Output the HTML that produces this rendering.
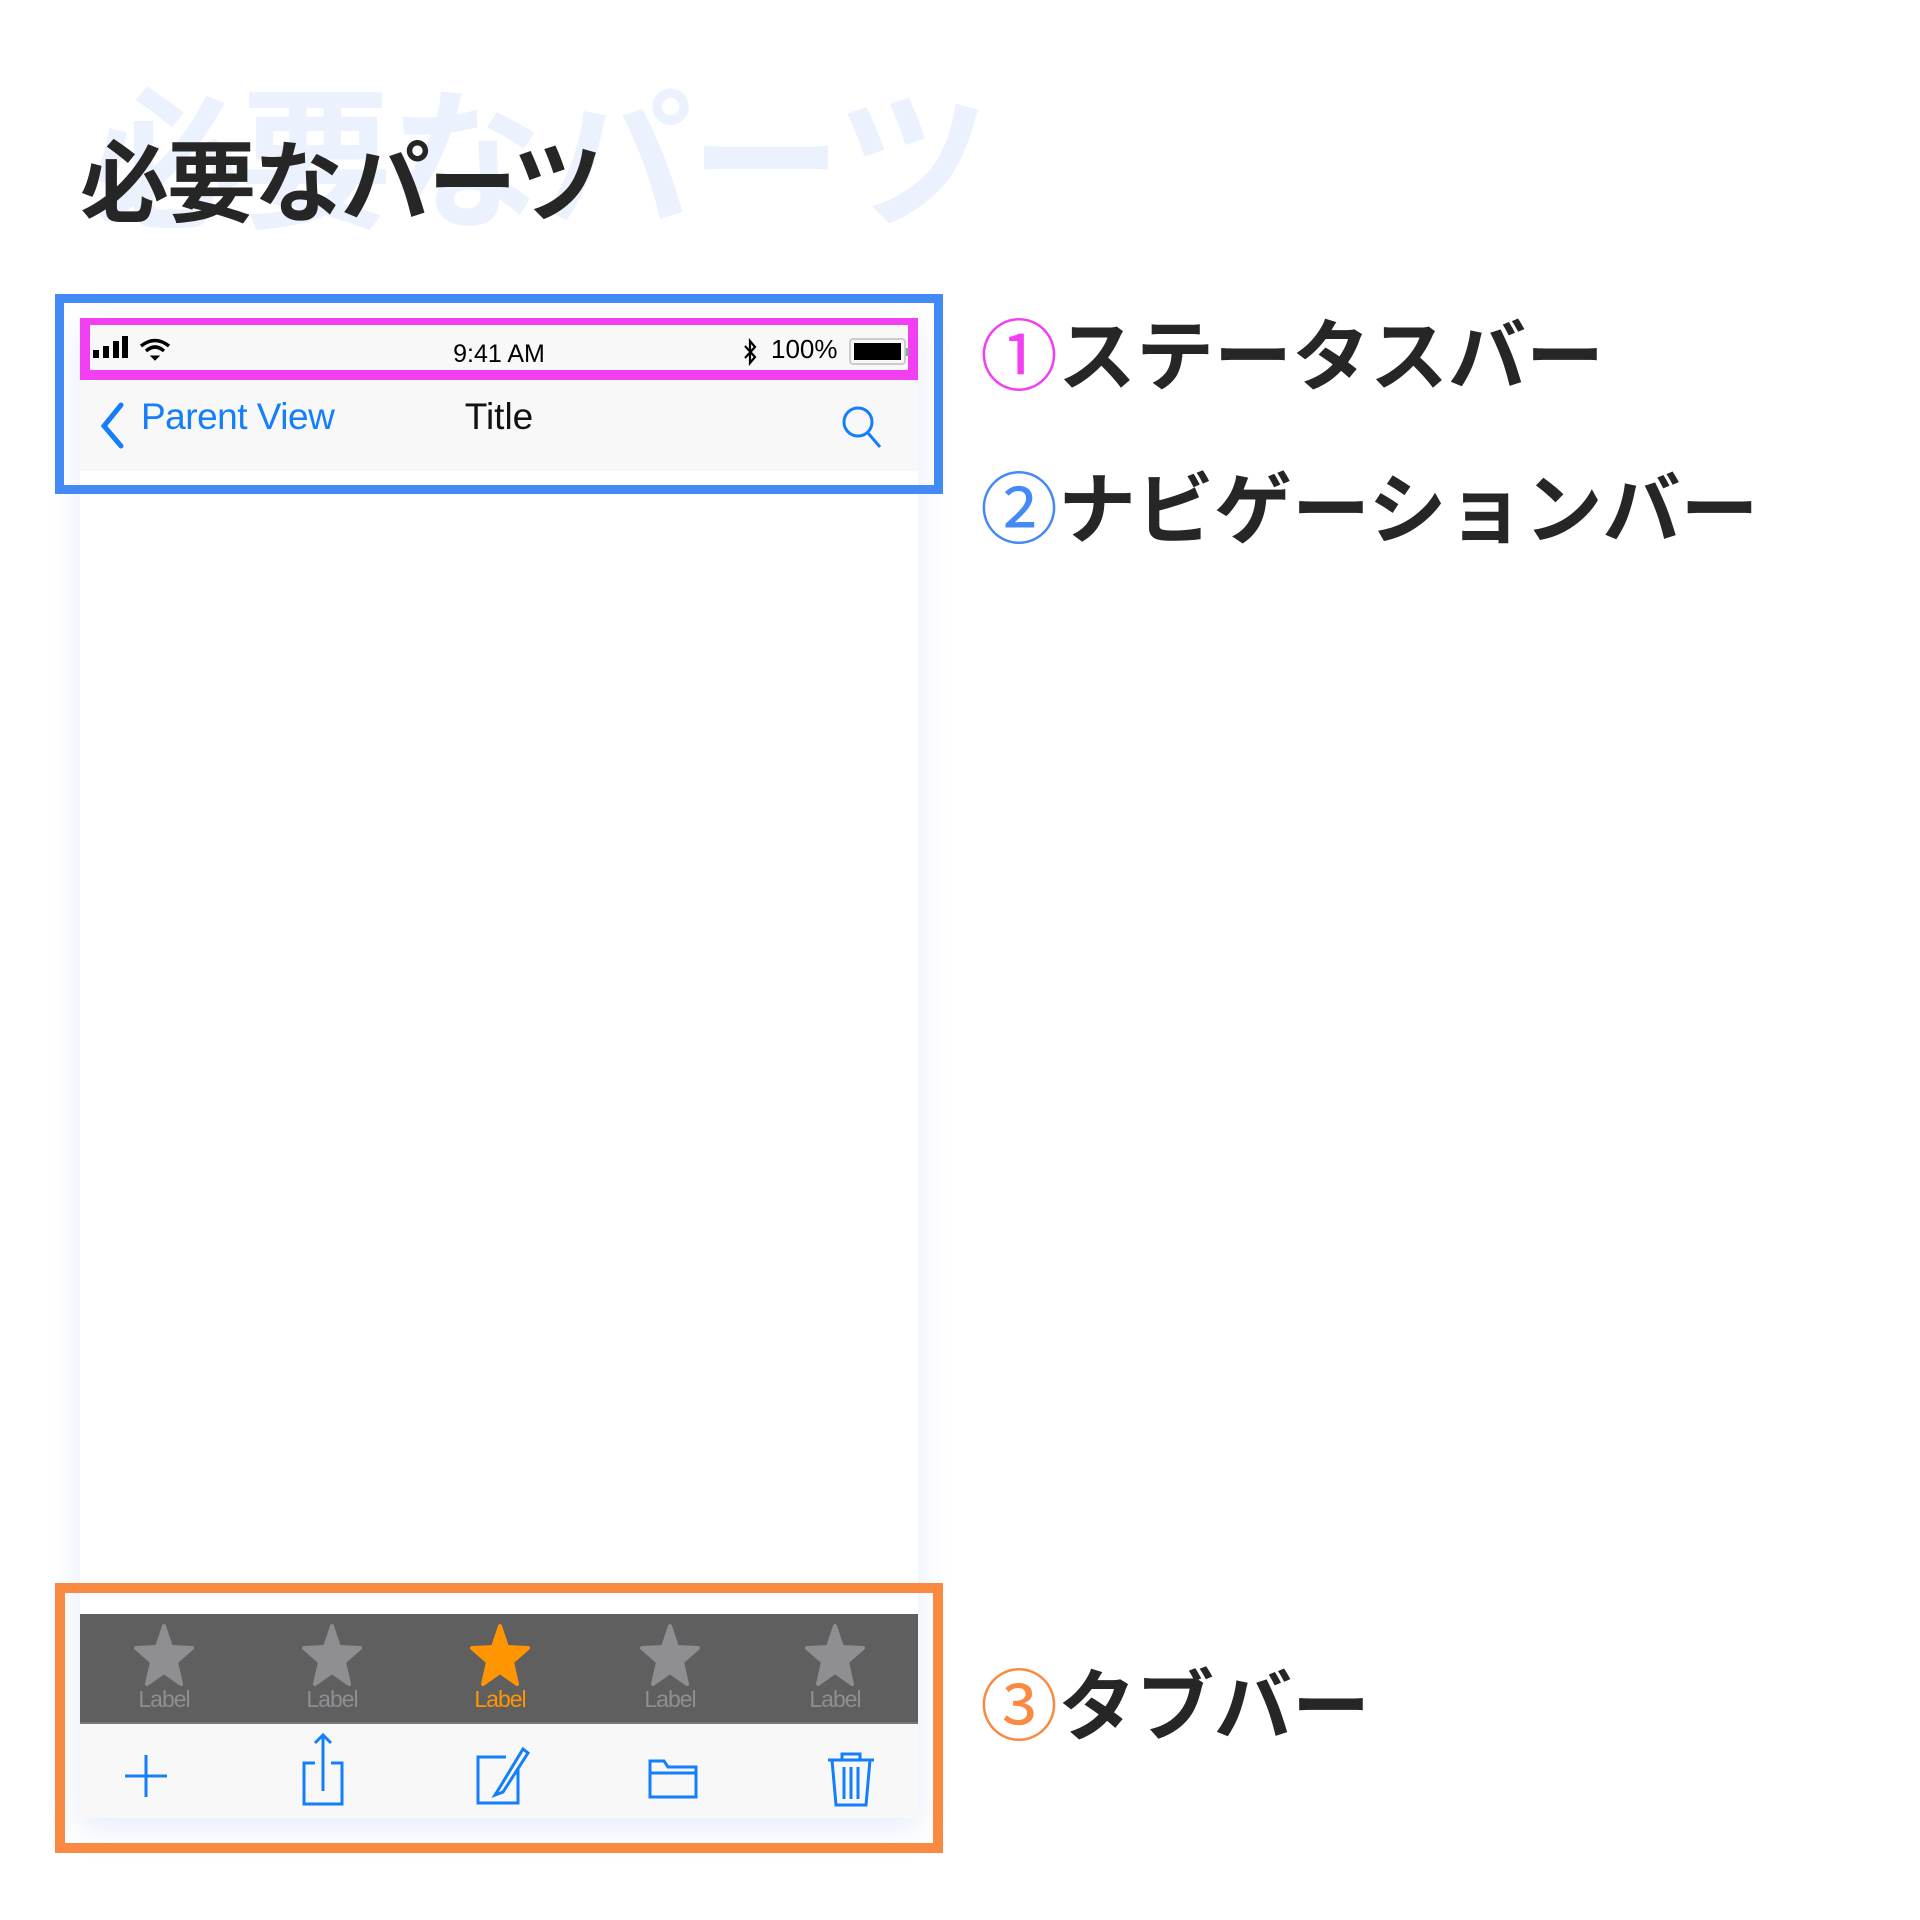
<!DOCTYPE html>
<html><head><meta charset="utf-8"><style>
*{margin:0;padding:0;box-sizing:border-box}
body{width:1920px;height:1920px;background:#fff;position:relative;overflow:hidden;font-family:"Liberation Sans","Noto Sans CJK JP",sans-serif}
.abs{position:absolute}
.wm{left:90px;top:88px;font-size:152px;font-weight:700;color:#EBF1FD;white-space:nowrap;letter-spacing:-2px;line-height:1}
.title{left:80px;top:140px;font-size:89px;font-weight:700;color:#262626;white-space:nowrap;line-height:1;letter-spacing:-2px}
.phone{left:80px;top:316px;width:838px;height:1502px;background:#fff;box-shadow:0 10px 30px rgba(120,150,240,.18)}
.sb{left:80px;top:318px;width:838px;height:62px;background:#F8F8F8;border:solid #F23FF2;border-width:7px 10px 10px 10px}
.nav{left:80px;top:380px;width:838px;height:91px;background:#F8F8F8}
.blue{left:55px;top:294px;width:888px;height:200px;border:9px solid #448AF7}
.orange{left:55px;top:1583px;width:888px;height:270px;border:10px solid #FA8A42}
.tab{left:80px;top:1614px;width:838px;height:110px;background:#5F5F5F;border-bottom:2px solid #777}
.tool{left:80px;top:1724px;width:838px;height:94px;background:#F8F8F8}
.lbl{font-size:78px;font-weight:700;color:#262626;white-space:nowrap;line-height:1;left:980px}
.lbl span{font-weight:400}
.tl{position:absolute;top:1686px;font-size:23px;color:#8E8E93;width:100px;text-align:center;letter-spacing:-1px}
</style></head><body>
<div class="abs wm">必要なパーツ</div>
<div class="abs title">必要なパーツ</div>
<div class="abs phone"></div>
<div class="abs nav"></div>
<div class="abs sb"></div>
<svg class="abs" style="left:92px;top:334px" width="40" height="28"><rect x="1" y="16" width="6" height="8"/><rect x="11" y="12" width="6" height="12"/><rect x="21" y="7" width="6" height="17"/><rect x="30" y="2" width="6" height="22"/></svg>
<svg class="abs" style="left:138px;top:336px" width="34" height="26" fill="none" stroke="#000" stroke-width="3.5"><path d="M3 10 Q17 -1 31 10"/><path d="M8 15 Q17 7 26 15"/><path d="M13 20 L17 24 L21 20 Z" fill="#000" stroke-width="1"/></svg>
<div class="abs" style="left:449px;top:340px;font-size:25px;width:100px;text-align:center">9:41 AM</div>
<svg class="abs" style="left:742px;top:338px" width="16" height="28" fill="none" stroke="#000" stroke-width="2.2"><path d="M3 8 L13 19 L8 25 L8 3 L13 9 L3 20"/></svg>
<div class="abs" style="left:771px;top:334px;font-size:26px">100%</div>
<div class="abs" style="left:849px;top:338px;width:57px;height:27px;border:2px solid #ccc;border-radius:4px;padding:3px"><div style="width:100%;height:100%;background:#000"></div></div>
<div class="abs" style="left:906px;top:348px;width:3px;height:8px;background:#999"></div>
<svg class="abs" style="left:96px;top:400px" width="32" height="50" fill="none" stroke="#147EFB" stroke-width="5" stroke-linecap="round"><path d="M25 5 L8 26 L25 46"/></svg>
<div class="abs" style="left:141px;top:396px;font-size:37px;color:#147EFB;letter-spacing:-0.5px">Parent View</div>
<div class="abs" style="left:449px;top:396px;font-size:37px;width:100px;text-align:center;color:#111">Title</div>
<svg class="abs" style="left:840px;top:404px" width="46" height="46" fill="none" stroke="#147EFB" stroke-width="3"><circle cx="18" cy="18" r="14"/><path d="M28 29 L40 43"/></svg>
<div class="abs blue"></div>
<div class="abs tab"></div>
<svg class="abs" style="left:80px;top:1620px" width="838" height="70">
<defs><path id="st" d="M0 -30 L7 -9 L28 -8 L12 6 L17 28 L0 16 L-17 28 L-12 6 L-28 -8 L-7 -9 Z" stroke-linejoin="round" stroke-width="4"/></defs>
<use href="#st" x="84" y="36" fill="#8E8E93" stroke="#8E8E93"/>
<use href="#st" x="252" y="36" fill="#8E8E93" stroke="#8E8E93"/>
<use href="#st" x="420" y="36" fill="#FF9500" stroke="#FF9500"/>
<use href="#st" x="590" y="36" fill="#8E8E93" stroke="#8E8E93"/>
<use href="#st" x="755" y="36" fill="#8E8E93" stroke="#8E8E93"/>
</svg>
<div class="tl" style="left:114px">Label</div>
<div class="tl" style="left:282px">Label</div>
<div class="tl" style="left:450px;color:#FF9500">Label</div>
<div class="tl" style="left:620px">Label</div>
<div class="tl" style="left:785px">Label</div>
<div class="abs tool"></div>
<svg class="abs" style="left:80px;top:1723px" width="838" height="96" fill="none" stroke="#147EFB" stroke-width="3">
<path d="M66 32 V74 M45 53 H87"/>
<path d="M235 40 H224 V81 H262 V40 H251 M243 68 V12 M235 20 L243 12 L251 20"/>
<path d="M438 46 V80 H398 V34 H426 M420 64 L415 72 L423 69 L448 30 L443 26 Z"/>
<path d="M570 38 H584 L588 44 H616 V74 H570 Z M570 50 H616"/>
<path d="M748 37 H794 M762 37 V31 H780 V37 M752 37 L756 82 H786 L790 37 M764 44 V76 M771 44 V76 M778 44 V76"/>
</svg>
<div class="abs orange"></div>
<div class="abs lbl" style="top:318px"><span style="color:#F23FF2">①</span>ステータスバー</div>
<div class="abs lbl" style="top:471px"><span style="color:#448AF7">②</span>ナビゲーションバー</div>
<div class="abs lbl" style="top:1668px"><span style="color:#FA8A42">③</span>タブバー</div>
</body></html>
